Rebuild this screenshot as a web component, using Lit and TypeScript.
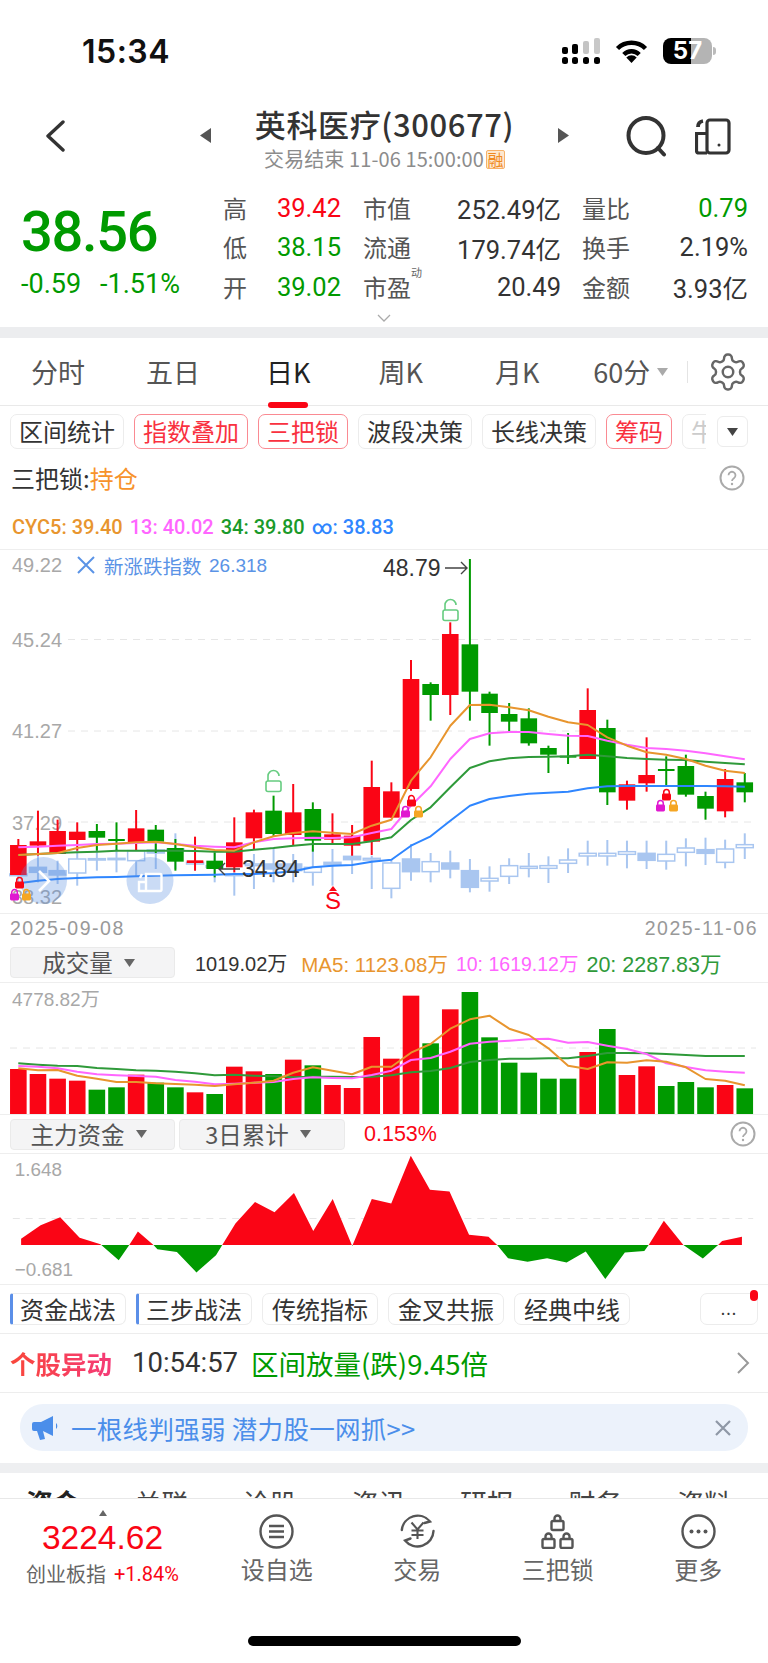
import { LitElement, html, svg, css } from 'lit';
import { customElement } from 'lit/decorators.js';

const RED = '#fa0515';
const GREEN = '#009a00';
const PALE = '#a9c6f0';

// all chart values are read off the reference: y is in page px * 3 from y=550
const X = (z: number) => z / 3;
const cx = (i: number) => (55 + 58.9 * i) / 3;
const Y = (z: number, base = 550) => base + z / 3;

// high, body top, body bottom, low, up
const CANDLES: [number, number, number, number, boolean][] = [
  [870, 888, 978, 978, true], [785, 877, 890, 920, true], [812, 846, 915, 915, true], [820, 848, 873, 905, true],
  [825, 846, 866, 905, false], [820, 870, 876, 905, false], [783, 838, 882, 905, true], [828, 842, 878, 912, false],
  [870, 897, 938, 965, false], [863, 934, 942, 965, true], [910, 935, 960, 985, false], [805, 880, 955, 970, true],
  [782, 790, 868, 900, true], [740, 785, 855, 862, false], [705, 790, 858, 890, true], [760, 780, 875, 908, false],
  [793, 856, 872, 885, true], [828, 860, 890, 920, true], [635, 714, 878, 918, true], [700, 727, 806, 806, true],
  [333, 390, 720, 725, true], [400, 405, 438, 515, false], [220, 255, 438, 498, true], [30, 286, 428, 515, false],
  [428, 434, 492, 590, false], [462, 495, 518, 548, false], [478, 508, 583, 590, false], [590, 597, 617, 672, false],
  [552, 620, 622, 645, false], [418, 483, 630, 630, true], [512, 537, 730, 768, false], [695, 706, 755, 782, true],
  [565, 678, 703, 728, true], [622, 660, 664, 710, false], [617, 651, 737, 743, false], [728, 741, 779, 812, false],
  [660, 690, 787, 805, true], [672, 700, 730, 760, false],
];

// overlaid index candles: high, body top, body bottom, low, filled
const INDEX: [number, number, number, number, boolean][] = [
  [960, 975, 980, 1010, true], [920, 955, 970, 1000, true], [935, 965, 978, 1005, true], [900, 930, 972, 1010, false],
  [850, 929, 933, 965, false], [900, 928, 932, 970, false], [880, 905, 935, 980, false], [880, 903, 912, 960, true],
  [853, 900, 905, 960, true], [900, 940, 945, 965, false], [910, 950, 955, 1000, false], [970, 975, 980, 1040, false],
  [915, 945, 950, 1020, false], [895, 945, 960, 1000, true], [915, 945, 965, 1000, true], [900, 955, 970, 1010, false],
  [900, 940, 947, 1010, true], [900, 922, 932, 975, true], [920, 928, 933, 1020, false], [930, 942, 1018, 1048, false],
  [885, 930, 968, 995, true], [912, 938, 968, 1000, false], [905, 942, 960, 988, true], [930, 965, 1015, 1030, true],
  [952, 988, 996, 1028, false], [928, 950, 982, 1005, false], [912, 952, 958, 985, false], [922, 950, 958, 1002, false],
  [898, 933, 943, 972, false], [875, 913, 921, 950, false], [873, 913, 921, 950, false], [875, 908, 916, 958, false],
  [875, 913, 934, 960, true], [875, 916, 936, 962, false], [868, 897, 910, 952, false], [866, 902, 913, 948, true],
  [872, 900, 940, 958, false], [853, 887, 896, 930, false],
];

const K_LINES: [string, number[]][] = [
  ['#2f86ff', [1003, 995, 990, 987, 985, 984, 982, 980, 979, 978, 977, 975, 975, 972, 967, 955, 950, 948, 938, 932, 890, 862, 815, 770, 750, 741, 734, 731, 728, 718, 712, 711, 711, 711, 711, 711, 712, 713]],
  ['#2f9a3a', [918, 915, 912, 910, 908, 905, 905, 905, 905, 906, 908, 908, 902, 897, 890, 885, 885, 885, 877, 865, 813, 775, 715, 657, 637, 628, 624, 623, 622, 617, 622, 627, 630, 632, 633, 638, 642, 646]],
  ['#ff66ff', [895, 893, 890, 888, 885, 884, 882, 880, 885, 890, 893, 895, 880, 870, 868, 866, 867, 865, 852, 840, 770, 712, 630, 570, 553, 549, 549, 555, 560, 561, 575, 587, 597, 600, 605, 613, 622, 631]],
  ['#e8952e', [918, 915, 912, 897, 888, 884, 880, 878, 885, 895, 903, 905, 880, 862, 852, 847, 851, 855, 830, 812, 695, 625, 530, 468, 467, 475, 484, 503, 520, 528, 565, 590, 610, 617, 630, 650, 665, 672]],
];

const VOLUME = [417, 432, 446, 452, 479, 472, 434, 458, 472, 487, 492, 410, 424, 432, 389, 406, 465, 474, 321, 386, 197, 340, 238, 186, 322, 398, 428, 446, 446, 366, 297, 435, 409, 468, 456, 472, 465, 475];
const VOL_UP = [1, 1, 1, 1, 0, 0, 1, 0, 0, 1, 0, 1, 1, 0, 1, 0, 1, 1, 1, 1, 1, 0, 1, 0, 0, 0, 0, 0, 0, 1, 0, 1, 1, 0, 0, 0, 1, 0];
const VOL_LINES: [string, number[]][] = [
  ['#2f9a3a', [400, 404, 407, 408, 414, 417, 421, 422, 425, 430, 436, 434, 437, 439, 442, 440, 440, 441, 440, 436, 427, 423, 414, 396, 390, 386, 386, 385, 385, 378, 369, 369, 370, 372, 375, 378, 378, 378]],
  ['#ff66ff', [408, 410, 415, 425, 433, 436, 438, 440, 450, 455, 463, 461, 458, 456, 447, 442, 444, 445, 435, 422, 390, 384, 365, 341, 335, 332, 328, 326, 338, 336, 347, 357, 372, 400, 411, 421, 425, 428]],
  ['#e8952e', [415, 421, 420, 437, 446, 456, 456, 460, 462, 464, 468, 463, 458, 452, 428, 412, 422, 433, 410, 410, 368, 342, 296, 268, 257, 296, 315, 355, 407, 417, 397, 398, 391, 395, 412, 447, 452, 466]],
];

const FLOW = [
  [55, 928], [114, 887], [173, 863], [232, 925], [295, 945], [350, 993], [382, 947], [408, 906], [455, 947], [467, 960],
  [526, 968], [585, 1030], [644, 978], [663, 947], [703, 882], [762, 817], [821, 848], [880, 790], [938, 905], [997, 808],
  [1056, 950], [1115, 808], [1174, 822], [1233, 677], [1291, 780], [1350, 785], [1409, 916], [1468, 922], [1494, 947],
  [1527, 987], [1586, 998], [1645, 987], [1704, 1000], [1762, 967], [1821, 1050], [1880, 970], [1939, 965], [1952, 947],
  [1998, 874], [2057, 947], [2116, 988], [2162, 947], [2174, 935], [2234, 922],
];

const polyline = (color: string, ys: number[], base: number) =>
  svg`<polyline points=${ys.map((y, i) => `${cx(i).toFixed(1)},${Y(y, base).toFixed(1)}`).join(' ')} fill="none" stroke=${color} stroke-width="2" stroke-linejoin="round"></polyline>`;

const lock = (x: number, y: number, color: string) => svg`
  <path d="M${x + 1.7} ${y + 5}V${y + 3.4}a2.8 2.8 0 0 1 5.6 0V${y + 5}" fill="none" stroke=${color} stroke-width="1.5"></path>
  <rect x=${x} y=${y + 4.5} width="9" height="7" rx="1.4" fill=${color}></rect>`;

const openLock = (x: number, y: number) => svg`
  <path d="M${x + 3} ${y + 11}V${y + 6}a5.5 5.5 0 0 1 11 0" fill="none" stroke="#66cc80" stroke-width="1.6"></path>
  <rect x=${x + 1} y=${y + 11} width="15" height="10.5" rx="2" fill="#fff" stroke="#66cc80" stroke-width="1.6"></rect>`;

@customElement('app-root')
export class AppRoot extends LitElement {
  static styles = css`
    :host {
      --red: #fa0515;
      --green: #009a00;
      --orange: #e8952e;
      --pink: #ff66ff;
      --ma-green: #2f9a3a;
      --blue: #2f86ff;
      display: block;
      width: 768px;
      height: 1663px;
      overflow: hidden;
      background: #fff;
      color: #333;
      font-family: 'Liberation Sans', 'Noto Sans CJK SC', sans-serif;
    }
    svg { display: block; }
    .c-dark { color: #333; }
    .c-orange { color: var(--orange); }
    .c-pink { color: var(--pink); }
    .c-green { color: #1a9a2a; }
    .c-magreen { color: var(--ma-green); }
    .c-blue { color: var(--blue); }

    .status { height: 100px; display: flex; align-items: flex-start; padding: 37px 56px 0 82px; box-sizing: border-box; justify-content: space-between; }
    .time { font: 600 32px/30px Inter, sans-serif; color: #111; letter-spacing: 0.5px; }
    .status-icons { display: flex; align-items: center; gap: 15px; margin-top: 1px; }
    .battery { width: 49px; height: 26px; border-radius: 8px; background: linear-gradient(90deg, #000 58%, #b4b4b4 58%); color: #fff; font: 700 24px/26px Inter, sans-serif; text-align: center; position: relative; }
    .battery::after { content: ''; position: absolute; right: -4px; top: 9px; width: 3px; height: 8px; border-radius: 0 3px 3px 0; background: #bbb; }

    .head { height: 75px; display: flex; position: relative; }
    .back { margin: 20px 0 0 45px; }
    .head-mid { position: absolute; left: 200px; width: 369px; top: 6px; display: flex; justify-content: space-between; align-items: flex-start; }
    .head-text { display: flex; flex-direction: column; align-items: center; }
    .title { font: 500 31px/36px 'Noto Sans CJK SC', sans-serif; color: #333; letter-spacing: 0.6px; }
    .sub { display: flex; align-items: center; gap: 2px; font: 400 20px/24px 'Noto Sans CJK SC', sans-serif; color: #8c8c8c; margin-top: 5px; letter-spacing: 0.1px; }
    .rong { width: 19px; height: 19px; box-sizing: border-box; background: #fde8cf; border: 1px solid #f7b26a; border-radius: 2px; color: #f08a1e; font-size: 16px; line-height: 16px; text-align: center; }
    .tri { margin-top: 22px; }
    .head-icons { display: flex; gap: 28px; margin: 16px 37px 0 auto; }
    .doc { margin-top: 2px; }

    .quote { height: 152px; display: flex; position: relative; box-sizing: border-box; }
    .price { width: 223px; padding-left: 21px; box-sizing: border-box; color: var(--green); }
    .price-main { font: 500 56px/64px Roboto, sans-serif; margin-top: 25px; letter-spacing: -1.300px; }
    .price-sub { font: 400 27px/30px Roboto, sans-serif; display: flex; gap: 19px; margin-top: 5px; }
    .stats { display: grid; grid-template-columns: 50px 68px 72px 148px 71px 116px; grid-auto-rows: 39.5px; margin-top: 13px; align-items: center; font-family: Roboto, 'Noto Sans CJK SC', sans-serif; font-size: 25.5px; }
    .lab { color: #555; font: 400 24px/30px 'Noto Sans CJK SC', sans-serif; position: relative; }
    .lab.c2 { margin-left: 22px; }
    .lab.c3 { margin-left: 21px; }
    .val { text-align: right; color: #333; white-space: nowrap; }
    .val.up { color: var(--red); }
    .val.dn { color: var(--green); }
    .lab sup { position: absolute; left: 48px; top: -6px; font-size: 11px; line-height: 12px; color: #666; }
    .more-chev { position: absolute; left: 377px; top: 139px; }

    .band { height: 11px; background: #ecedef; }
    .band.low { height: 10px; background: #eeeff1; }

    .tabs { height: 68px; box-sizing: border-box; border-bottom: 1px solid #e9e9e9; display: flex; align-items: flex-start; font: 400 27px/38px 'Noto Sans CJK SC', sans-serif; color: #555; padding-top: 15px; }
    .tab { white-space: nowrap; }
    .tab.t0 { margin-left: 31px; }
    .tab.t1 { margin-left: 61px; }
    .tab.t2 { margin-left: 66px; color: #222; position: relative; }
    .tab.t3 { margin-left: 68px; }
    .tab.t4 { margin-left: 72px; }
    .tab.t5 { margin-left: 54px; display: flex; align-items: center; gap: 7px; }
    .tab.t2::after { content: ''; position: absolute; left: 2px; top: 49px; width: 40px; height: 6px; border-radius: 3px; background: var(--red); }
    .tab-sep { width: 1px; height: 22px; background: #e4e4e4; margin: 8px 0 0 19px; }
    .gear { margin: -2px 0 0 19px; }

    .chips { height: 50px; padding: 8px 0 0 10px; box-sizing: border-box; display: flex; }
    .chip-scroll { width: 696px; display: flex; gap: 10px; overflow: hidden; flex: none; }
    .chip { height: 35px; box-sizing: border-box; flex: none; border: 1px solid #ececec; border-radius: 7px; padding: 0 8px; font: 400 24px/32px 'Noto Sans CJK SC', sans-serif; color: #333; white-space: nowrap; }
    .chip.on { border-color: #fa8a92; color: #f9313f; }
    .chip.fade { color: #ccc; }
    .chip-drop { margin: 2px 0 0 11px; width: 31px; height: 31px; border: 1px solid #ececec; border-radius: 6px; box-sizing: border-box; display: flex; align-items: center; justify-content: center; }

    .lockline { height: 48px; display: flex; align-items: center; justify-content: space-between; padding: 0 23px 4px 11px; box-sizing: border-box; font: 400 24px/30px 'Noto Sans CJK SC', sans-serif; color: #333; }
    .lockline b { font-weight: 400; color: #f7932b; }
    .ma { height: 46px; display: flex; align-items: center; gap: 7px; padding-left: 12px; font: 500 20px/24px Roboto, sans-serif; border-bottom: 1px solid #eee; box-sizing: border-box; white-space: nowrap; }

    .chart { border-bottom: 1px solid #eee; }
    .axis { font: 400 20px 'Liberation Sans', 'Noto Sans CJK SC', sans-serif; fill: #a8a8a8; dominant-baseline: central; }
    .axis.sm { font-size: 19px; }
    .mark { font: 400 23px 'Liberation Sans', sans-serif; fill: #333; dominant-baseline: central; }
    .legend { font: 400 19.500px 'Noto Sans CJK SC', sans-serif; fill: #5a93e6; dominant-baseline: central; }
    .legend-num { font: 400 19px 'Liberation Sans', sans-serif; fill: #5a93e6; dominant-baseline: central; }
    .s-mark { font: 400 24px 'Liberation Sans', sans-serif; fill: var(--red); dominant-baseline: central; }

    .dates { height: 27px; display: flex; justify-content: space-between; padding: 0 10px; font: 400 19.500px/28px 'Liberation Sans', sans-serif; letter-spacing: 1.500px; color: #999; box-sizing: border-box; }
    .subhead { height: 42px; display: flex; align-items: flex-end; padding: 0 0 4px 10px; box-sizing: border-box; border-bottom: 1px solid #eee; white-space: nowrap; }
    .drop { height: 31px; box-sizing: border-box; width: 165px; background: #f4f4f5; border: 1px solid #eaeaea; border-radius: 4px; display: flex; align-items: center; justify-content: center; gap: 11px; padding-right: 8px; font: 400 23.500px/29px 'Noto Sans CJK SC', sans-serif; color: #555; flex: none; }
    .drop.wide { width: 166px; }
    .vol-vals { display: flex; align-items: center; height: 31px; margin-left: 20px; gap: 8px; font-size: 20.500px; }
    .vol-vals .now { font-size: 20px; margin-right: 6px; }
    .vol-vals .v10 { font-size: 19.500px; }
    .vol-vals .v20 { font-size: 21.500px; }
    .ind { height: 40px; display: flex; align-items: center; padding: 0 12px 0 10px; gap: 4px; box-sizing: border-box; border-top: 1px solid #eee; border-bottom: 1px solid #eee; }
    .ind .pct { margin-left: 15px; color: var(--red); font-size: 21.500px; }
    .help { margin-left: auto; }
    .lockline .help { margin-left: 0; }

    .flow { border-bottom: 1px solid #eee; height: 131px; box-sizing: border-box; }

    .strategies { height: 49px; padding: 8px 10px 0; box-sizing: border-box; display: flex; gap: 10px; border-bottom: 1px solid #ededed; }
    .chip.s { height: 32px; width: 116px; padding: 0 9px; line-height: 30px; position: relative; }
    .chip.s.bar { border-left: 3px solid #5b8fe8; padding-left: 7px; border-radius: 3px 7px 7px 3px; }
    .chip.dots { margin-left: auto; width: 58px; height: 32px; text-align: center; position: relative; line-height: 28px; font-size: 16px; letter-spacing: 1px; padding: 0; }
    .dot { position: absolute; right: -1px; top: -4px; width: 8px; height: 11px; background: var(--red); border-radius: 5px; }

    .notice { height: 59px; box-sizing: border-box; border-bottom: 1px solid #ededed; display: flex; align-items: center; padding: 0 18px 0 10px; font: 400 27.500px/34px 'Noto Sans CJK SC', sans-serif; white-space: nowrap; }
    .notice-tag { font-size: 25.500px; font-weight: 700; background: linear-gradient(90deg, #f9473a, #f53a78); -webkit-background-clip: text; background-clip: text; color: transparent; }
    .notice-time { margin-left: 20px; font-family: Roboto, sans-serif; color: #333; }
    .notice-msg { margin-left: 13px; color: var(--green); }
    .notice svg { margin-left: auto; }

    .banner-wrap { height: 70px; padding: 11px 20px 12px; box-sizing: border-box; }
    .banner { height: 47px; background: #ecf2fb; border-radius: 23px; display: flex; align-items: center; padding: 0 17px 0 12px; color: #4b8eea; font: 400 25.500px/34px 'Noto Sans CJK SC', sans-serif; white-space: pre; letter-spacing: 0.300px; }
    .banner span { margin-left: 11px; }
    .banner svg:last-child { margin-left: auto; }

    .subtabs { height: 25px; overflow: hidden; padding-left: 26px; display: flex; font: 400 27px/36px 'Noto Sans CJK SC', sans-serif; color: #444; box-sizing: border-box; padding-top: 12px; gap: 54.500px; }
    .subtabs b { font-weight: 700; color: #222; }

    .nav { height: 116px; border-top: 1px solid #e8e8e8; display: flex; box-sizing: border-box; }
    .index { width: 208px; flex: none; display: flex; flex-direction: column; align-items: center; padding: 11px 3px 0 0; box-sizing: border-box; }
    .index-num { font: 400 33.500px/38px 'Liberation Sans', sans-serif; color: var(--red); margin-top: 3px; }
    .index-sub { font: 400 20px/28px 'Noto Sans CJK SC', sans-serif; color: #666; white-space: nowrap; display: flex; gap: 8px; margin-top: 3px; }
    .index-sub em { font: 400 20px/28px Roboto, sans-serif; color: var(--red); }
    .nav-sep { width: 1px; height: 47px; background: #e4e4e4; margin-top: 25px; }
    .nav-items { display: grid; grid-template-columns: repeat(4, 140.500px); margin-left: -1.500px; }
    .nav-item { display: flex; flex-direction: column; align-items: center; padding-top: 15px; font: 400 24px/34px 'Noto Sans CJK SC', sans-serif; color: #666; gap: 3px; }
    .home { height: 49px; padding-top: 22px; box-sizing: border-box; }
    .home div { width: 273px; height: 10px; background: #000; border-radius: 5px; margin-left: 248px; }
  `;

  renderKChart() {
    const grid = [640.5, 732, 823];
    return svg`<svg class="chart" width="768" height="363" viewBox="0 551 768 363">
      ${grid.map((y) => svg`<line x1="68" x2="756" y1=${y} y2=${y} stroke="#e6e6e6" stroke-dasharray="7 6"></line>`)}
      <text class="axis" x="12" y="566">49.22</text>
      <text class="axis" x="12" y="641">45.24</text>
      <text class="axis" x="12" y="732">41.27</text>
      <text class="axis" x="12" y="824">37.29</text>
      <text class="axis" x="12" y="898">38.32</text>
      <path d="M78 558l16 16M94 558l-16 16" stroke="#5a93e6" stroke-width="2" fill="none"></path>
      <text class="legend" x="104" y="566">新涨跌指数</text>
      <text class="legend-num" x="209" y="566">26.318</text>

      ${INDEX.map(([h, t, b, l, fill], i) => svg`
        <line x1=${cx(i)} x2=${cx(i)} y1=${Y(h)} y2=${Y(l)} stroke=${PALE} stroke-width="2"></line>
        <rect x=${cx(i) - 8.5} y=${Y(t)} width="17" height=${(b - t) / 3} fill=${fill ? PALE : '#fff'} stroke=${PALE} stroke-width="1.5"></rect>`)}

      ${CANDLES.map(([h, t, b, l, up], i) => {
        const c = up ? RED : GREEN;
        return svg`
          <line x1=${cx(i)} x2=${cx(i)} y1=${Y(h)} y2=${Y(l)} stroke=${c} stroke-width="2"></line>
          <rect x=${cx(i) - 8.3} y=${Y(t)} width="16.6" height=${Math.max((b - t) / 3, 2)} fill=${c}></rect>`;
      })}

      ${K_LINES.map(([c, ys]) => polyline(c, ys, 550))}

      <circle cx="43.5" cy="881.5" r="23.5" fill="#5b8fe0" opacity="0.32"></circle>
      <path d="M39 872l10 10-10 10" fill="none" stroke="#fff" stroke-width="2.6"></path>
      <circle cx="150" cy="881.5" r="23.5" fill="#5b8fe0" opacity="0.32"></circle>
      <path d="M146 875h14a1.5 1.5 0 0 1 1.5 1.5v14a1.5 1.5 0 0 1-1.5 1.5h-14zM146 892h-7v-9h7M140 879l2-4" fill="none" stroke="#fff" stroke-width="2.4"></path>

      <text class="mark" x="383" y="569">48.79</text>
      <path d="M445 569h22M461 563l6 6-6 6" fill="none" stroke="#444" stroke-width="1.4"></path>
      <path d="M240 870h-21M225 864l-6 6 6 6" fill="none" stroke="#444" stroke-width="1.4"></path>
      <text class="mark" x="242" y="870">34.84</text>

      ${openLock(265, 771)}
      ${openLock(442, 600)}
      ${lock(15, 878, RED)} ${lock(10, 890, '#e018d0')} ${lock(22, 890, '#f5a623')}
      ${lock(407, 796, RED)} ${lock(401, 807, '#e018d0')} ${lock(414, 807, '#f5a623')}
      ${lock(662, 790, RED)} ${lock(656, 801, '#e018d0')} ${lock(669, 801, '#f5a623')}
      <path d="M333 887l4 5h-8z" fill=${RED}></path>
      <text class="s-mark" x="325" y="901">S</text>
    </svg>`;
  }

  renderVolChart() {
    const base = 930;
    return svg`<svg width="768" height="131" viewBox="0 983 768 131">
      <line x1="10" x2="756" y1="1048" y2="1048" stroke="#e6e6e6" stroke-dasharray="7 6"></line>
      <text class="axis sm" x="12" y="999">4778.82万</text>
      ${VOLUME.map((top, i) => svg`<rect x=${cx(i) - 8.3} y=${Y(top, base)} width="16.6" height=${(552 - top) / 3} fill=${VOL_UP[i] ? RED : GREEN}></rect>`)}
      ${VOL_LINES.map(([c, ys]) => polyline(c, ys, base))}
    </svg>`;
  }

  renderFlowChart() {
    const base = 930;
    const zero = Y(947, base);
    const pts = FLOW.map(([x, y]) => `${X(x).toFixed(1)},${Y(y, base).toFixed(1)}`).join(' ');
    const area = `${X(FLOW[0][0])},${zero} ${pts} ${X(FLOW[FLOW.length - 1][0])},${zero}`;
    return svg`<svg class="flow" width="768" height="131" viewBox="0 1154 768 131">
      <defs>
        <clipPath id="above"><rect x="0" y="1154" width="768" height=${zero - 1154}></rect></clipPath>
        <clipPath id="below"><rect x="0" y=${zero} width="768" height="40"></rect></clipPath>
      </defs>
      <line x1="10" x2="756" y1="1219" y2="1219" stroke="#e6e6e6" stroke-dasharray="7 6"></line>
      <text class="axis sm" x="12" y="1170">1.648</text>
      <text class="axis sm" x="12" y="1270">−0.681</text>
      <polygon points=${area} fill=${RED} clip-path="url(#above)"></polygon>
      <polygon points=${area} fill=${GREEN} clip-path="url(#below)"></polygon>
    </svg>`;
  }

  helpIcon(size: number) {
    return html`<svg class="help" width=${size} height=${size} viewBox="0 0 26 26">
      <circle cx="13" cy="13" r="11.5" fill="none" stroke="#aaa" stroke-width="2"></circle>
      <path d="M9.5 10.2a3.5 3.5 0 1 1 5.4 3c-1.2.8-1.9 1.4-1.9 2.8" fill="none" stroke="#aaa" stroke-width="1.8"></path>
      <circle cx="13" cy="19" r="1.2" fill="#aaa"></circle>
    </svg>`;
  }

  caret(color = '#666') {
    return html`<svg width="11" height="8" viewBox="0 0 11 8"><path d="M0 0h11L5.5 8z" fill=${color}></path></svg>`;
  }

  render() {
    return html`
      <div class="status">
        <div class="time">15:34</div>
        <div class="status-icons">
          <svg width="38" height="26" viewBox="0 0 38 26">
            <g fill="#000">
              <rect x="0" y="19" width="6" height="7" rx="2.500"></rect><rect x="10" y="19" width="6" height="7" rx="2.500"></rect>
              <rect x="21" y="19" width="6" height="7" rx="2.500"></rect><rect x="32" y="19" width="6" height="7" rx="2.500"></rect>
              <rect x="0" y="9" width="6" height="7" rx="2"></rect><rect x="10" y="6" width="6" height="10" rx="2"></rect>
            </g>
            <rect x="21" y="3" width="6" height="13" rx="2" fill="#c4c4c4"></rect>
            <rect x="32" y="0" width="6" height="16" rx="2" fill="#c8c8c8"></rect>
          </svg>
          <svg width="33" height="24" viewBox="0 0 33 24" fill="none" stroke="#000" stroke-width="4.500">
            <path d="M2.500 9.500A20 20 0 0 1 30.500 9.500"></path>
            <path d="M8.800 15.500A11 11 0 0 1 24.200 15.500"></path>
            <path d="M16.500 24l-5.200-5.500a7.400 7.400 0 0 1 10.400 0z" fill="#000" stroke="none"></path>
          </svg>
          <div class="battery">57</div>
        </div>
      </div>

      <div class="head">
        <svg class="back" width="20" height="32" viewBox="0 0 20 32"><path d="M18 2L3 16l15 14" fill="none" stroke="#333" stroke-width="3.400" stroke-linecap="round" stroke-linejoin="round"></path></svg>
        <div class="head-mid">
          <svg class="tri" width="11" height="15" viewBox="0 0 11 15"><path d="M11 0v15L0 7.500z" fill="#555"></path></svg>
          <div class="head-text">
            <div class="title">英科医疗(300677)</div>
            <div class="sub">交易结束 11-06 15:00:00<span class="rong">融</span></div>
          </div>
          <svg class="tri" width="11" height="15" viewBox="0 0 11 15"><path d="M0 0v15l11-7.500z" fill="#555"></path></svg>
        </div>
        <div class="head-icons">
          <svg width="41" height="41" viewBox="0 0 41 41"><circle cx="20" cy="19.500" r="17.500" fill="none" stroke="#333" stroke-width="4"></circle><path d="M32 32l6 6.500" stroke="#333" stroke-width="4" stroke-linecap="round"></path></svg>
          <svg class="doc" width="36" height="37" viewBox="0 0 36 37" fill="none" stroke="#333" stroke-width="3.200">
            <rect x="12" y="2" width="22" height="33" rx="3"></rect>
            <path d="M12 35H4a2.500 2.500 0 0 1-2.500-2.500V15.500H12"></path>
            <path d="M3 9c0-3.500 2-5.500 5-6" stroke-width="3.800"></path>
            <circle cx="24" cy="27" r="1.500" fill="#333" stroke="none"></circle>
          </svg>
        </div>
      </div>

      <div class="quote">
        <div class="price">
          <div class="price-main">38.56</div>
          <div class="price-sub"><span>-0.59</span><span>-1.51%</span></div>
        </div>
        <div class="stats">
          <span class="lab">高</span><span class="val up">39.42</span><span class="lab c2">市值</span><span class="val">252.49亿</span><span class="lab c3">量比</span><span class="val dn">0.79</span>
          <span class="lab">低</span><span class="val dn">38.15</span><span class="lab c2">流通</span><span class="val">179.74亿</span><span class="lab c3">换手</span><span class="val">2.19%</span>
          <span class="lab">开</span><span class="val dn">39.02</span><span class="lab c2">市盈<sup>动</sup></span><span class="val">20.49</span><span class="lab c3">金额</span><span class="val">3.93亿</span>
        </div>
        <svg class="more-chev" width="14" height="8" viewBox="0 0 14 8"><path d="M1 1l6 6 6-6" fill="none" stroke="#aaa" stroke-width="1.300"></path></svg>
      </div>
      <div class="band"></div>

      <div class="tabs">
        <span class="tab t0">分时</span><span class="tab t1">五日</span><span class="tab t2">日K</span><span class="tab t3">周K</span><span class="tab t4">月K</span>
        <span class="tab t5">60分${this.caret('#aaa')}</span>
        <span class="tab-sep"></span>
        <svg class="gear" width="42" height="42" viewBox="0 0 24 24" fill="none" stroke="#666" stroke-width="1.400">
          <path d="M12.220 2h-.44a2 2 0 0 0-2 2v.18a2 2 0 0 1-1 1.730l-.43.25a2 2 0 0 1-2 0l-.15-.08a2 2 0 0 0-2.730.73l-.22.38a2 2 0 0 0 .73 2.730l.15.1a2 2 0 0 1 1 1.720v.51a2 2 0 0 1-1 1.740l-.15.09a2 2 0 0 0-.73 2.730l.22.38a2 2 0 0 0 2.730.73l.15-.08a2 2 0 0 1 2 0l.43.25a2 2 0 0 1 1 1.730V20a2 2 0 0 0 2 2h.44a2 2 0 0 0 2-2v-.18a2 2 0 0 1 1-1.730l.43-.25a2 2 0 0 1 2 0l.15.08a2 2 0 0 0 2.730-.73l.22-.39a2 2 0 0 0-.73-2.730l-.15-.08a2 2 0 0 1-1-1.740v-.5a2 2 0 0 1 1-1.740l.15-.09a2 2 0 0 0 .73-2.730l-.22-.38a2 2 0 0 0-2.730-.73l-.15.08a2 2 0 0 1-2 0l-.43-.25a2 2 0 0 1-1-1.730V4a2 2 0 0 0-2-2z"></path>
          <circle cx="12" cy="12" r="3"></circle>
        </svg>
      </div>

      <div class="chips">
        <div class="chip-scroll">
          <span class="chip">区间统计</span><span class="chip on">指数叠加</span><span class="chip on">三把锁</span><span class="chip">波段决策</span><span class="chip">长线决策</span><span class="chip on">筹码</span><span class="chip fade">牛股</span>
        </div>
        <div class="chip-drop">${this.caret('#444')}</div>
      </div>

      <div class="lockline"><span>三把锁:<b>持仓</b></span>${this.helpIcon(26)}</div>
      <div class="ma">
        <span class="c-orange">CYC5: 39.40</span><span class="c-pink">13: 40.02</span><span class="c-green">34: 39.80</span><span class="c-blue">∞: 38.83</span>
      </div>

      ${this.renderKChart()}
      <div class="dates"><span>2025-09-08</span><span>2025-11-06</span></div>

      <div class="subhead">
        <div class="drop">成交量${this.caret()}</div>
        <div class="vol-vals">
          <span class="c-dark now">1019.02万</span>
          <span class="c-orange">MA5: 1123.08万</span>
          <span class="c-pink v10">10: 1619.12万</span>
          <span class="c-magreen v20">20: 2287.83万</span>
        </div>
      </div>
      ${this.renderVolChart()}

      <div class="ind">
        <div class="drop">主力资金${this.caret()}</div>
        <div class="drop wide">3日累计${this.caret()}</div>
        <span class="pct">0.153%</span>
        ${this.helpIcon(26)}
      </div>
      ${this.renderFlowChart()}

      <div class="strategies">
        <span class="chip s bar">资金战法</span><span class="chip s bar">三步战法</span><span class="chip s">传统指标</span><span class="chip s">金叉共振</span><span class="chip s">经典中线</span>
        <span class="chip dots">...<i class="dot"></i></span>
      </div>

      <div class="notice">
        <span class="notice-tag">个股异动</span>
        <span class="notice-time">10:54:57</span>
        <span class="notice-msg">区间放量(跌)9.45倍</span>
        <svg width="14" height="24" viewBox="0 0 14 24"><path d="M2 2l10 10L2 22" fill="none" stroke="#999" stroke-width="2"></path></svg>
      </div>

      <div class="banner-wrap">
        <div class="banner">
          <svg width="28" height="26" viewBox="0 0 28 26"><path d="M2 7h7l12-6v20L11 16l2 8-5 1-3-9H2a2 2 0 0 1-2-2V9a2 2 0 0 1 2-2z" fill="#4b8eea"></path><path d="M24 8a4 4 0 0 1 0 6z" fill="#4b8eea"></path></svg>
          <span>一根线判强弱 潜力股一网抓&gt;&gt;</span>
          <svg width="16" height="16" viewBox="0 0 16 16"><path d="M1 1l14 14M15 1L1 15" stroke="#8f98a6" stroke-width="2.200"></path></svg>
        </div>
      </div>
      <div class="band low"></div>

      <div class="subtabs"><b>资金</b><span>关联</span><span>论股</span><span>资讯</span><span>研报</span><span>财务</span><span>资料</span></div>

      <div class="nav">
        <div class="index">
          <svg width="8" height="6" viewBox="0 0 8 6"><path d="M4 0l4 6H0z" fill="#666"></path></svg>
          <div class="index-num">3224.62</div>
          <div class="index-sub">创业板指<em>+1.84%</em></div>
        </div>
        <div class="nav-sep"></div>
        <div class="nav-items">
          <div class="nav-item">
            <svg width="35" height="35" viewBox="0 0 35 35" fill="none" stroke="#555" stroke-width="2.400"><circle cx="17.500" cy="17.500" r="16"></circle><path d="M10 12h15M10 17.500h15M10 23h15" stroke-width="2.600"></path></svg>
            设自选
          </div>
          <div class="nav-item">
            <svg width="35" height="35" viewBox="0 0 35 35" fill="none" stroke="#555" stroke-width="2.400" stroke-linecap="round">
              <path d="M1.800 16A16 16 0 0 1 30 7.500L24.500 9"></path>
              <path d="M33.500 17A16 16 0 0 1 5 26.500L10.500 24.500"></path>
              <path d="M11.500 8.500l6 7 6-7M17.500 15.500V25M11.500 16.500h12M11.500 21h12" stroke-width="2.100" stroke-linecap="butt"></path>
            </svg>
            交易
          </div>
          <div class="nav-item">
            <svg width="35" height="35" viewBox="0 0 35 35" fill="none" stroke="#555" stroke-width="2.400">
              <rect x="11.500" y="7" width="12" height="9" rx="1.500"></rect><path d="M14.500 7V4.500a3 3 0 0 1 6 0V7"></path>
              <rect x="2.500" y="25" width="12" height="9" rx="1.500"></rect><path d="M5.500 25v-2.500a3 3 0 0 1 6 0V25"></path>
              <rect x="20.500" y="25" width="12" height="9" rx="1.500"></rect><path d="M23.500 25v-2.500a3 3 0 0 1 6 0V25"></path>
            </svg>
            三把锁
          </div>
          <div class="nav-item">
            <svg width="35" height="35" viewBox="0 0 35 35" fill="none" stroke="#555" stroke-width="2.400"><circle cx="17.500" cy="17.500" r="16"></circle><circle cx="10.500" cy="17.500" r="2" fill="#555" stroke="none"></circle><circle cx="17.500" cy="17.500" r="2" fill="#555" stroke="none"></circle><circle cx="24.500" cy="17.500" r="2" fill="#555" stroke="none"></circle></svg>
            更多
          </div>
        </div>
      </div>
      <div class="home"><div></div></div>
    `;
  }
}
